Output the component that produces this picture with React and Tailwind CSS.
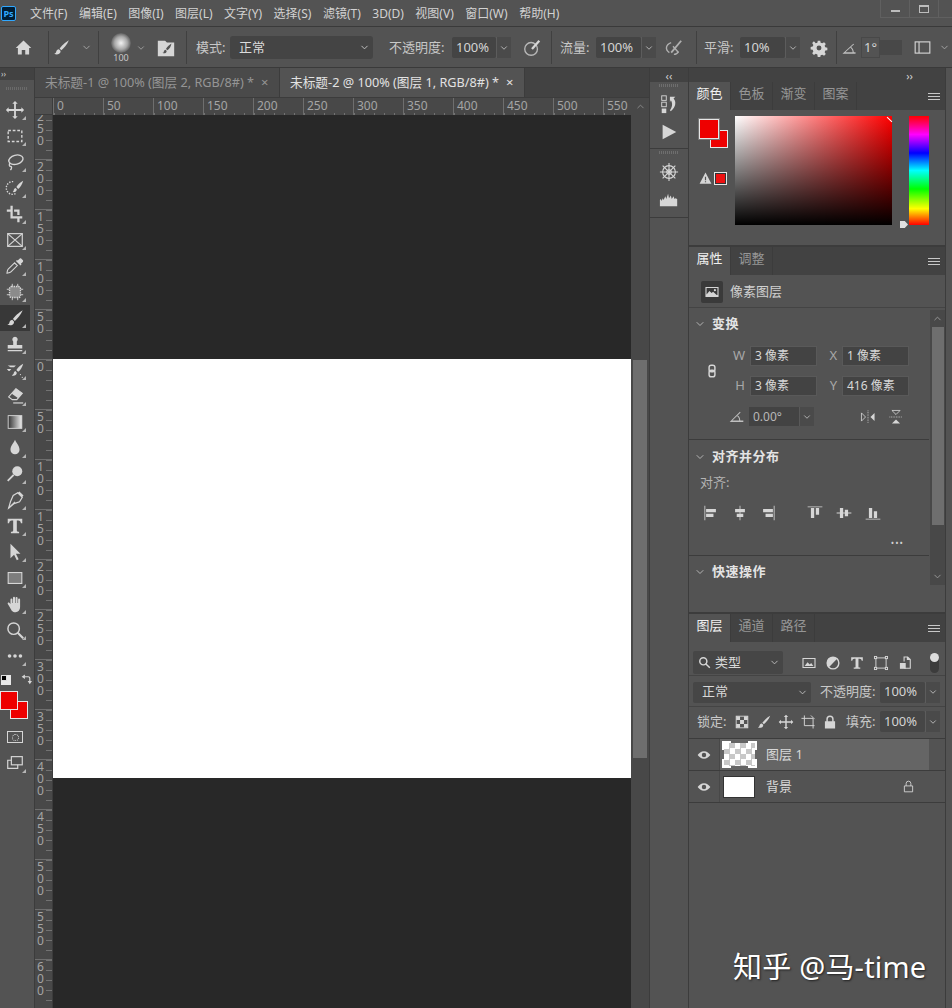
import { ChevronDown, ChevronUp } from "lucide-react";

const menus = ["文件(F)", "编辑(E)", "图像(I)", "图层(L)", "文字(Y)", "选择(S)", "滤镜(T)", "3D(D)", "视图(V)", "窗口(W)", "帮助(H)"];
const hMarks = [0, 50, 100, 150, 200, 250, 300, 350, 400, 450, 500, 550];
const vMarks = [250, 200, 150, 100, 50, 0, 50, 100, 150, 200, 250, 300, 350, 400, 450, 500, 550, 600];

const Ic = ({ size = 20, children, className = "" }) => (
  <svg width={size} height={size} viewBox="0 0 22 22" fill="#d6d6d6" stroke="none" className={className}>
    {children}
  </svg>
);

const brush = "M19.5 2.5C15 5 10.5 9.5 8.8 12.2l2 2C13.5 12 17.5 7.5 19.500 2.500zM8 13c-2 .3-3 1.700-3.200 3.200-.1 1-1 1.800-2.300 2 2.500 1.300 5.500 1 6.700-.7.8-1.100.8-2.100.6-2.700z";

const tools = [
  { icon: <path d="M11 1l3 3h-2v6h6V8l3 3-3 3v-2h-6v6h2l-3 3-3-3h2v-6H4v2l-3-3 3-3v2h6V4H8z" /> },
  { icon: <rect x="3.500" y="5" width="15" height="12" fill="none" stroke="#d6d6d6" strokeWidth="1.500" strokeDasharray="3 2" /> },
  { icon: <g fill="none" stroke="#d6d6d6" strokeWidth="1.500"><ellipse cx="12" cy="8.500" rx="8" ry="5" transform="rotate(-15 12 8.500)" /><path d="M6 12c-2 1.500-1.500 4 .5 4 1 0 1 2-.5 4" /></g> },
  { icon: <g><path d="M9 4a7 7 0 1 0 3 13" fill="none" stroke="#d6d6d6" strokeWidth="1.500" strokeDasharray="1.500 1.500" /><path d="M20 3c-3 1.500-6 4.500-7.500 7l2 2c2.500-2 4.500-5 5.500-9zM11.500 11c-1.500.5-2 2-2 3l-1 1.500c2 .5 4.500-.5 4.500-3z" /></g> },
  { icon: <path d="M6 2h2.500v11.500H19V16h-3v4h-2.500v-4H6V8.500H2V6h4zM10 6h6v6h-2.500V8.500H10z" /> },
  { icon: <g fill="none" stroke="#d6d6d6" strokeWidth="1.300"><rect x="3" y="4" width="16" height="14" /><path d="M3 4l16 14M19 4L3 18" /></g> },
  { icon: <g><path d="M17.500 2.500l2 2c.8.8.5 1.700-.2 2.300l-1.800 1.700 .7.800-1.200 1.200-5-5 1.200-1.200.8.700 1.700-1.800c.6-.7 1-1 1.800-.7z" /><path d="M10.500 7.500l-7 7c-1 1-1 2.500-1.300 4.300 1.800-.3 3.300-.3 4.300-1.300l7-7z" fill="none" stroke="#d6d6d6" strokeWidth="1.200" /></g> },
  { icon: <g><rect x="5" y="5" width="12" height="12" rx="2" fill="#8b8b8b" stroke="#d6d6d6" strokeDasharray="1.500 1" strokeWidth="1.500" /><path d="M2 8h3M2 14h3M17 8h3M17 14h3M8 2v3M14 2v3M8 17v3M14 17v3" stroke="#d6d6d6" /></g> },
  { active: true, icon: <path d={brush} /> },
  { icon: <path d="M11 3a3 3 0 0 1 2 5.200V12h6v4H3v-4h6V8.200A3 3 0 0 1 11 3zM3 17.500h16V19H3z" /> },
  { icon: <g><path d="M20 4c-3 1.500-6 4.500-7.500 7l2 2c2.500-2 4.500-5 5.500-9zM11.500 12c-1.500.5-2 2-2 3l-2 2c2 1 5.500 0 5.500-3z" /><path d="M3 6h9l-2 2H6zM2 10h5l-2 2H4z" /><circle cx="17" cy="16" r=".7" /><circle cx="19" cy="19" r=".7" /></g> },
  { icon: <g><path d="M12 3l7 5-6 7H8l-4-3z" fill="none" stroke="#d6d6d6" strokeWidth="1.200" /><path d="M12 3l7 5-4.500 5.500-7-5z" /><path d="M9 18h11v1.300H9z" /></g> },
  { icon: <g><defs><linearGradient id="gr"><stop offset="0" stopColor="#333" /><stop offset="1" stopColor="#eee" /></linearGradient></defs><rect x="3.500" y="4" width="15" height="14" fill="url(#gr)" stroke="#d6d6d6" /></g> },
  { icon: <path d="M11 2c1 3 5 6.500 5 11a5 5 0 0 1-10 0c0-4.500 4-8 5-11z" /> },
  { icon: <g><circle cx="13.500" cy="8" r="5.500" /><path d="M9.500 12L3 18.500" stroke="#d6d6d6" strokeWidth="2" /></g> },
  { icon: <g fill="none" stroke="#d6d6d6" strokeWidth="1.300"><path d="M14 3l5 5-3 5-6 2-6 5 2-7 3-7z" /><path d="M4 20l7-7" /><path d="M15 2.500l4.500 4.500" strokeWidth="2.500" /></g> },
  { icon: <path d="M3 3h16v5h-1.500c-.3-2-1-3-3-3H13v11c0 1 .8 1.300 2.500 1.300V19h-9v-1.700c1.700 0 2.500-.3 2.500-1.300V5H7.500c-2 0-2.700 1-3 3H3z" /> },
  { icon: <path d="M6 2l11 11h-5l3 6-2 1-3-6-4 4z" /> },
  { icon: <rect x="3.500" y="5" width="15" height="12" fill="#7d7d7d" stroke="#d6d6d6" strokeWidth="1.200" /> },
  { icon: <path d="M6 11V6a1.100 1.100 0 0 1 2.200 0v4h.6V4a1.100 1.100 0 0 1 2.200 0v6h.6V4.500a1.100 1.100 0 0 1 2.200 0V10h.6V6a1.100 1.100 0 0 1 2.200 0v8c0 3.500-2 6-5 6-3.500 0-4.500-2-6-5l-2.500-4c-.7-1.200.8-2.200 1.800-1.200z" /> },
  { icon: <g fill="none" stroke="#d6d6d6" strokeWidth="1.600"><circle cx="9.500" cy="9.500" r="6.300" /><path d="M14 14l6 6" strokeWidth="2.300" /></g> },
  { icon: <g><circle cx="5" cy="11" r="2" /><circle cx="11" cy="11" r="2" /><circle cx="17" cy="11" r="2" /></g> },
];

function Corner() {
  return <span className="absolute bottom-[3px] right-[4px] h-0 w-0 border-b-[4px] border-l-[4px] border-b-[#b5b5b5] border-l-transparent" />;
}

function Toolbar() {
  return (
    <div className="flex w-[35px] shrink-0 flex-col border-r border-[#3c3c3c] bg-[#535353]">
      <div className="flex h-[12px] items-center bg-[#424242] pl-[1px] text-[8px] leading-none text-[#d0d0d0]">››</div>
      <div className="flex h-[17px] items-center justify-center">
        <span className="h-[3px] w-[22px] bg-[repeating-linear-gradient(90deg,#6a6a6a_0,#6a6a6a_1px,transparent_1px,transparent_2px)]" />
      </div>
      {tools.map((t, i) => (
        <div key={i} className={`relative flex h-[26px] w-[30px] items-center justify-center ${t.active ? "bg-[#383838]" : ""}`}>
          <Ic size={20}>{t.icon}</Ic>
          <Corner />
        </div>
      ))}
      <div className="mt-[5px] flex h-[12px] items-center gap-[9px] pl-[1px]">
        <span className="relative h-[10px] w-[10px] bg-[#e8e8e8]"><span className="block h-[6px] w-[6px] border border-[#ddd] bg-black" /></span>
        <Ic size={12}><g fill="none" stroke="#d6d6d6" strokeWidth="2.200"><path d="M8 5h7a3 3 0 0 1 3 3v6" /></g><path d="M9 1v8L3 5zM14 13h8l-4 6z" /></Ic>
      </div>
      <div className="relative mt-[5px] h-[28px]">
        <span className="absolute left-[10px] top-[10px] h-[18px] w-[18px] border border-[#e6e6e6] bg-[#ee0000]" />
        <span className="absolute left-0 top-0 h-[19px] w-[18px] border border-[#e6e6e6] bg-[#ee0000]" />
      </div>
      <div className="mt-[5px] flex h-[26px] w-[30px] items-center justify-center">
        <span className="flex h-[12px] w-[16px] items-center justify-center border border-[#d6d6d6]"><span className="h-[7px] w-[7px] rounded-full border border-dotted border-[#d6d6d6]" /></span>
      </div>
      <div className="relative flex h-[26px] w-[30px] items-center justify-center">
        <Ic size={20}><g fill="none" stroke="#d6d6d6" strokeWidth="1.300"><rect x="7" y="4" width="12" height="9" /><path d="M7 8H3v9h11v-4" /></g></Ic>
        <Corner />
      </div>
    </div>
  );
}

function Field({ children, className = "" }) {
  return <div className={`flex h-[21px] items-center rounded-[2px] bg-[#444444] pl-[4px] text-[13px] text-[#d4d4d4] ${className}`}>{children}</div>;
}

function FieldChevron({ className = "" }) {
  return (
    <span className={`flex h-[21px] w-[15px] items-center justify-center border-l border-[#5c5c5c] bg-[#4a4a4a] ${className}`}>
      <ChevronDown size={10} color="#c8c8c8" />
    </span>
  );
}

function Divider() {
  return <span className="block h-[33px] w-px bg-[#404040]" />;
}

function OptionsBar() {
  return (
    <div className="flex h-[41px] shrink-0 items-center border-b border-[#3a3a3a] bg-[#535353] pt-[1px] text-[13px] text-[#c8c8c8]">
      <Ic size={19} className="ml-[14px]"><path d="M11 3l9 8.500h-2.500V19h-4.500v-5H9v5H4.500v-7.500H2z" /></Ic>
      <span className="ml-[15px]"><Divider /></span>
      <Ic size={19} className="ml-[3px]"><path d={brush} /></Ic>
      <ChevronDown size={11} color="#a8a8a8" className="ml-[10px]" />
      <span className="ml-[6px]"><Divider /></span>
      <div className="ml-[11px] flex w-[22px] flex-col items-center">
        <span className="h-[20px] w-[20px] rounded-full bg-[radial-gradient(circle,#f2f2f2_0%,#a8a8a8_45%,#535353_75%)]" />
        <span className="text-[9px] leading-[10px]">100</span>
      </div>
      <ChevronDown size={10} color="#a8a8a8" className="ml-[4px]" />
      <Ic size={20} className="ml-[10px]"><path d="M2 3h8l2 2h8v15H2zM17 6c-2.500 1.500-5 4-6 6l1.500 1.500C15 12 16.500 9 17 6zM10.500 13c-1.500.3-1.800 1.500-2 2.300-.1.500-.5 1-1.500 1 1.500 1 4 .8 4.500-.8.2-.7.2-1.200.1-1.500z" fillRule="evenodd" /></Ic>
      <span className="ml-[10px]"><Divider /></span>
      <span className="ml-[9px] w-[30px] whitespace-nowrap">模式:</span>
      <div className="ml-[4px] flex h-[23px] w-[143px] items-center justify-between rounded-[3px] bg-[#444444] pl-[9px] pr-[3px] text-[#dcdcdc]">
        正常<ChevronDown size={11} color="#c8c8c8" />
      </div>
      <span className="ml-[16px] w-[56px] whitespace-nowrap">不透明度:</span>
      <Field className="ml-[7px] w-[44px]">100%</Field>
      <FieldChevron />
      <Ic size={20} className="ml-[11px]"><g fill="none" stroke="#b8b8b8" strokeWidth="1.500"><circle cx="10" cy="12" r="7" /><path d="M19 3l-8 9" strokeWidth="2.500" stroke="#d6d6d6" /></g></Ic>
      <span className="ml-[9px]"><Divider /></span>
      <span className="ml-[8px] w-[30px] whitespace-nowrap">流量:</span>
      <Field className="ml-[6px] w-[45px]">100%</Field>
      <FieldChevron />
      <Ic size={20} className="ml-[7px]"><g fill="none" stroke="#b0b0b0" strokeWidth="1.500"><path d="M9 5C3 7 2 13 7 16M12 18c2 0 4-1 5-3" /><path d="M20 3L9 16" strokeWidth="2" /><path d="M11 9l6 7" /></g></Ic>
      <span className="ml-[13px]"><Divider /></span>
      <span className="ml-[7px] w-[30px] whitespace-nowrap">平滑:</span>
      <Field className="ml-[6px] w-[45px]">10%</Field>
      <FieldChevron />
      <Ic size={18} className="ml-[10px]"><path fillRule="evenodd" d="M9.500 2h3l.5 2.500 2 .8 2.200-1.400 2.100 2.100-1.400 2.200.8 2 2.500.5v3l-2.500.5-.8 2 1.400 2.200-2.100 2.100-2.200-1.400-2 .8-.5 2.500h-3L9 18.900l-2-.8-2.200 1.400-2.100-2.100 1.400-2.200-.8-2-2.500-.5v-3l2.500-.5.8-2-1.400-2.200 2.100-2.100L7 5.300l2-.8zM11 8a3 3 0 1 0 0 6 3 3 0 0 0 0-6z" /></Ic>
      <span className="ml-[8px]"><Divider /></span>
      <Ic size={16} className="ml-[4px]"><path d="M2 19L17 5l1 1L6 17h10c0-3-1-5-3-6.500l1-1c2.500 2 3.500 4.500 3.500 7.500H20v2z" fill="#c0c0c0" /></Ic>
      <div className="ml-[4px] flex h-[21px] w-[41px]">
        <span className="flex h-full w-[19px] items-center border border-[#484848] pl-[2px] text-[#d4d4d4]">1°</span>
        <span className="my-[3px] flex-1 bg-[#484848]" />
      </div>
      <Ic size={19} className="ml-[11px]"><g fill="none" stroke="#d6d6d6" strokeWidth="1.300"><rect x="2.500" y="4.500" width="17" height="13" /><path d="M7 4.500v13" /></g></Ic>
      <ChevronDown size={11} color="#a8a8a8" className="ml-[7px]" />
    </div>
  );
}

function HRuler() {
  return (
    <div className="flex h-[17px] shrink-0 bg-[#484848]">
      <div className="w-[18px] shrink-0 border-b border-r border-[#3c3c3c] bg-[#505050]" />
      <div className="flex w-[578px] overflow-hidden">
        {hMarks.map((m) => (
          <div key={m} className="h-full w-[50px] shrink-0 border-l border-[#6e6e6e] bg-[repeating-linear-gradient(90deg,#727272_0,#727272_1px,transparent_1px,transparent_10px)] bg-[length:100%_2px] bg-bottom bg-no-repeat pl-[3px] text-[12px] leading-[16px] text-[#a4a4a4]">
            {m}
          </div>
        ))}
      </div>
      <div className="flex flex-1 items-center justify-center bg-[#484848]">
        <ChevronUp size={11} color="#8c8c8c" />
      </div>
    </div>
  );
}

function VRuler() {
  return (
    <div className="w-[18px] shrink-0 overflow-hidden border-r border-[#3c3c3c] bg-[#484848]">
      <div className="-mt-[6px]">
        {vMarks.map((m, i) => (
          <div key={i} className="h-[50px] border-t border-[#6e6e6e] bg-[repeating-linear-gradient(180deg,#727272_0,#727272_1px,transparent_1px,transparent_10px)] bg-[length:6px_100%] bg-right bg-no-repeat pl-[2px] pt-[1px]">
            <div className="w-[8px] break-all text-[12px] leading-[12px] text-[#a4a4a4]">{m}</div>
          </div>
        ))}
      </div>
    </div>
  );
}

function DocTab({ title, active }) {
  return (
    <div className={`flex h-full w-[245px] items-center border-r border-[#3c3c3c] pl-[10px] text-[12.700px] ${active ? "bg-[#535353] text-[#e2e2e2]" : "bg-[#4a4a4a] text-[#959595]"}`}>
      <span className="w-[216px] whitespace-nowrap">{title}</span>
      <span className="text-[13px] leading-none">×</span>
    </div>
  );
}

function Document() {
  return (
    <div className="flex w-[615px] shrink-0 flex-col border-r border-[#3c3c3c]">
      <div className="flex h-[30px] shrink-0 border-b border-[#3c3c3c] bg-[#424242]">
        <DocTab title="未标题-1 @ 100% (图层 2, RGB/8#) *" />
        <DocTab title="未标题-2 @ 100% (图层 1, RGB/8#) *" active />
      </div>
      <HRuler />
      <div className="flex min-h-0 flex-1">
        <VRuler />
        <div className="flex w-[578px] shrink-0 flex-col bg-[#282828]">
          <div className="h-[244px]" />
          <div className="h-[419px] bg-white" />
        </div>
        <div className="flex-1 bg-[#484848] px-[2px] pt-[245px]">
          <div className="h-[398px] bg-[#6e6e6e]" />
        </div>
      </div>
    </div>
  );
}

function Grip() {
  return <span className="mx-auto block h-[3px] w-[20px] bg-[repeating-linear-gradient(90deg,#6e6e6e_0,#6e6e6e_1px,transparent_1px,transparent_2px)]" />;
}

function CollapsedDock() {
  return (
    <div className="flex w-[39px] shrink-0 flex-col border-r border-[#3c3c3c] bg-[#535353]">
      <div className="flex h-[14px] items-center justify-center bg-[#424242] text-[11px] leading-none text-[#d0d0d0]">‹‹</div>
      <div className="flex h-[67px] flex-col items-center border-b border-[#3c3c3c] pt-[2px]">
        <Grip />
        <Ic size={20} className="mt-[7px]">
          <g fill="none" stroke="#d6d6d6"><rect x="3" y="2" width="5" height="5" /><rect x="3" y="9" width="5" height="5" /></g>
          <rect x="3" y="16" width="5" height="5" />
          <path d="M12 3h6l-2 2c3 3 3 9-3 14l-1-1c3-4 3-8 1-11l-1 2z" />
        </Ic>
        <Ic size={20} className="mt-[8px]"><path d="M4 3l15 8-15 8z" /></Ic>
      </div>
      <div className="flex h-[69px] flex-col items-center border-b border-[#3c3c3c] pt-[2px]">
        <Grip />
        <Ic size={20} className="mt-[8px]">
          <g fill="none" stroke="#d6d6d6" strokeWidth="1.200"><circle cx="11" cy="11" r="7" /><circle cx="11" cy="11" r="2.500" /><path d="M11 1v20M1 11h20M4 4l14 14M18 4L4 18" /></g>
        </Ic>
        <Ic size={20} className="mt-[8px]"><path d="M1 18V11l1-1 1 2 1-3 1 2 2-4 1 3 2-6 1 5 2-3 1 4 2-3 1 3 1-1 2 1v8z" /></Ic>
      </div>
    </div>
  );
}

function PanelTabs({ tabs }) {
  return (
    <div className="flex h-[28px] shrink-0 items-stretch justify-between bg-[#424242] pr-[5px]">
      <div className="flex">
        {tabs.map((t, i) => (
          <div key={t} className={`flex w-[42px] items-center justify-center border-r border-[#3c3c3c] pb-[4px] text-[13px] ${i === 0 ? "bg-[#535353] text-[#f0f0f0]" : "text-[#969696]"}`}>
            {t}
          </div>
        ))}
      </div>
      <div className="flex w-[12px] flex-col justify-center gap-[2px]">
        <span className="h-px bg-[#c8c8c8]" /><span className="h-px bg-[#c8c8c8]" /><span className="h-px bg-[#c8c8c8]" />
      </div>
    </div>
  );
}

function ColorPanel() {
  return (
    <div className="flex h-[165px] shrink-0 flex-col border-b-2 border-[#3c3c3c]">
      <PanelTabs tabs={["颜色", "色板", "渐变", "图案"]} />
      <div className="flex flex-1 pl-[10px] pt-[6px]">
        <div className="mt-[3px] w-[36px]">
          <div className="relative h-[32px]">
            <span className="absolute left-[11px] top-[11px] h-[18px] w-[18px] border border-[#e6e6e6] bg-[#ee0000]" />
            <span className="absolute left-0 top-0 h-[20px] w-[20px] border border-[#e6e6e6] bg-[#ee0000] outline-1 outline-[#777]" />
          </div>
          <div className="mt-[21px] flex items-center gap-[2px]">
            <Ic size={13}><path fillRule="evenodd" d="M11 1l10 19H1zM10 8v6h2V8zM10 15.500v2h2v-2z" /></Ic>
            <span className="flex h-[13px] w-[13px] items-center justify-center border border-[#e6e6e6] bg-[#333]"><span className="h-[9px] w-[9px] bg-[#ee1111]" /></span>
          </div>
        </div>
        <div className="relative h-[109px] w-[157px] bg-[linear-gradient(to_top,#000,transparent),linear-gradient(to_right,#fff,#f00)]">
          <span className="absolute right-[2px] top-0 h-[7px] w-[1px] -rotate-45 bg-white" />
        </div>
        <div className="relative ml-[17px] h-[109px] w-[20px] bg-[linear-gradient(to_bottom,#f00,#f0f_17%,#00f_34%,#0ff_50%,#0f0_67%,#ff0_85%,#f00)]">
          <span className="absolute -left-[9px] -bottom-[3px] h-[7px] w-[8px] bg-[#e0e0e0] [clip-path:polygon(0_0,60%_0,100%_50%,60%_100%,0_100%)]" />
        </div>
      </div>
    </div>
  );
}

function SectionTitle({ children }) {
  return (
    <div className="flex items-center text-[13px] font-bold leading-none tracking-[0.500px] text-[#e4e4e4]">
      <ChevronDown size={12} color="#b4b4b4" className="ml-[5px] mr-[6px]" />
      {children}
    </div>
  );
}

function NumField({ label, value }) {
  return (
    <div className="flex items-center">
      <span className="w-[18px] pr-[5px] text-right text-[13px] text-[#a8a8a8]">{label}</span>
      <div className="flex h-[20px] w-[67px] items-center border border-[#595959] bg-[#434343] pl-[4px] text-[12px] text-[#d8d8d8]">{value}</div>
    </div>
  );
}

function AlignIcon({ d }) {
  return <Ic size={18}><path d={d} /></Ic>;
}

function PropertiesPanel() {
  return (
    <div className="flex h-[367px] shrink-0 flex-col border-b-2 border-[#3c3c3c]">
      <PanelTabs tabs={["属性", "调整"]} />
      <div className="flex h-[33px] shrink-0 items-center gap-[7px] border-b border-[#444] pl-[12px] pt-[2px] text-[13px] text-[#d0d0d0]">
        <span className="flex h-[22px] w-[22px] items-center justify-center rounded-[2px] bg-[#3a3a3a]">
          <Ic size={16}><path fillRule="evenodd" d="M2 4h18v14H2zM3.500 5.500v9l4-5 3 3 2-2 5 4.500h1V5.500zM15 7a1.500 1.500 0 1 1 0 3 1.500 1.500 0 0 1 0-3z" /></Ic>
        </span>
        像素图层
      </div>
      <div className="flex min-h-0 flex-1">
        <div className="w-[240px] shrink-0">
          <div className="h-[132px] border-b border-[#3c3c3c] pt-[9px]">
            <SectionTitle>变换</SectionTitle>
            <div className="flex items-center">
              <Ic size={16} className="ml-[15px] mt-[16px]"><g fill="none" stroke="#d6d6d6" strokeWidth="2"><rect x="7" y="3" width="8" height="9" rx="3" /><rect x="7" y="10" width="8" height="9" rx="3" /></g></Ic>
              <div className="ml-[12px] mt-[16px] flex flex-col gap-[10px]">
                <div className="flex gap-[7px]"><NumField label="W" value="3 像素" /><NumField label="X" value="1 像素" /></div>
                <div className="flex gap-[7px]"><NumField label="H" value="3 像素" /><NumField label="Y" value="416 像素" /></div>
              </div>
            </div>
            <div className="mt-[11px] flex items-center">
              <Ic size={15} className="ml-[40px]"><path d="M1 19L16 4l1 1L5 17h10c0-3-1-5-3-6.500l1-1c2.500 2 3.500 4.500 3.500 7.500H21v2z" fill="#c0c0c0" /></Ic>
              <div className="ml-[5px] flex h-[19px] w-[50px] items-center bg-[#434343] pl-[4px] text-[12px] text-[#b8b8b8]">0.00°</div>
              <span className="flex h-[19px] w-[15px] items-center justify-center border-l border-[#595959] bg-[#4a4a4a]"><ChevronDown size={10} color="#c0c0c0" /></span>
              <Ic size={18} className="ml-[45px]"><g><path d="M3 6l5 5-5 5z" fill="none" stroke="#d6d6d6" /><path d="M19 6l-5 5 5 5z" /><path d="M11 3v16" stroke="#d6d6d6" strokeDasharray="1 1" /></g></Ic>
              <Ic size={18} className="ml-[10px]"><g><path d="M6 3l5 5 5-5z" fill="none" stroke="#d6d6d6" /><path d="M6 19l5-5 5 5z" /><path d="M3 11h16" stroke="#d6d6d6" strokeDasharray="1 1" /></g></Ic>
            </div>
          </div>
          <div className="h-[116px] border-b border-[#3c3c3c] pt-[10px]">
            <SectionTitle>对齐并分布</SectionTitle>
            <div className="mt-[11px] pl-[11px] text-[13px] leading-[16px] text-[#b4b4b4]">对齐:</div>
            <div className="mt-[14px] flex items-center pl-[13px]">
              <AlignIcon d="M3 2h1v18H3zM5 6h12v4H5zM5 12h9v4H5z" />
              <span className="ml-[11px]"><AlignIcon d="M10.500 2h1v18h-1zM5 6h12v4H5zM7 12h8v4H7z" /></span>
              <span className="ml-[10px]"><AlignIcon d="M18 2h1v18h-1zM5 6h12v4H5zM8 12h9v4H8z" /></span>
              <span className="ml-[29px]"><AlignIcon d="M2 3h18v1H2zM6 5h4v12H6zM12 5h4v8h-4z" /></span>
              <span className="ml-[11px]"><AlignIcon d="M2 10.500h18v1H2zM6 5h4v12H6zM12 7h4v8h-4z" /></span>
              <span className="ml-[11px]"><AlignIcon d="M2 18h18v1H2zM6 5h4v12H6zM12 9h4v8h-4z" /></span>
            </div>
            <div className="mt-[14px] pr-[25px] text-right text-[9px] leading-[14px] tracking-[1px] text-[#d0d0d0]">•••</div>
          </div>
          <div className="pt-[9px]">
            <SectionTitle>快速操作</SectionTitle>
          </div>
        </div>
        <div className="ml-[1px] mt-[2px] flex h-[275px] w-[15px] flex-col items-center bg-[#484848]">
          <ChevronUp size={11} color="#9a9a9a" className="my-[3px]" />
          <div className="h-[198px] w-[12px] bg-[#6e6e6e]" />
          <div className="flex-1" />
          <ChevronDown size={11} color="#9a9a9a" className="mb-[3px]" />
        </div>
      </div>
    </div>
  );
}

function LayerRow({ name, selected, thumb, locked }) {
  return (
    <div className="flex h-[32px] border-b border-[#3c3c3c]">
      <div className="flex w-[31px] items-center justify-center border-r border-[#484848]">
        <Ic size={14}><path fillRule="evenodd" d="M11 5c4.500 0 8 3.500 10 6-2 2.500-5.500 6-10 6S3 13.500 1 11c2-2.500 5.500-6 10-6zM11 7.500a3.500 3.500 0 1 0 0 7 3.500 3.500 0 0 0 0-7z" /></Ic>
      </div>
      <div className={`flex w-[209px] items-center pl-[2px] text-[13px] text-[#d8d8d8] ${selected ? "bg-[#656565]" : "bg-[#535353]"}`}>
        {thumb}
        <span className="ml-[9px]">{name}</span>
        {locked && <Ic size={13} className="ml-[110px]"><path fill="none" stroke="#d6d6d6" strokeWidth="1.500" d="M4 10h14v10H4zM7 10V6a4 4 0 0 1 8 0v4" /></Ic>}
      </div>
    </div>
  );
}

function LayersPanel() {
  const filters = [
    <path key="a" fillRule="evenodd" d="M2 4h18v14H2zM3.500 5.500v11h15v-11zM5 15l4-5 3 3 2-2 3 4z" />,
    <path key="b" fillRule="evenodd" d="M11 2a9 9 0 1 1 0 18 9 9 0 0 1 0-18zM16 6L6 16a7 7 0 0 0 10-10z" />,
    <path key="c" d="M3 3h16v5h-1.500c-.3-2-1-3-3-3H13v11c0 1 .8 1.300 2.500 1.300V19h-9v-1.700c1.700 0 2.500-.3 2.500-1.300V5H7.500c-2 0-2.700 1-3 3H3z" />,
    <g key="d" fill="none" stroke="#d6d6d6" strokeWidth="1.300"><rect x="4" y="4" width="14" height="14" /><rect x="2" y="2" width="3" height="3" fill="#535353" /><rect x="17" y="2" width="3" height="3" fill="#535353" /><rect x="2" y="17" width="3" height="3" fill="#535353" /><rect x="17" y="17" width="3" height="3" fill="#535353" /></g>,
    <g key="e"><path d="M9 2h6l4 4v13H10v-1.500h7.500V7h-4V3.500H10.500V9H9z" /><rect x="4" y="11" width="8" height="8" /></g>,
  ];
  const locks = [
    <g key="a"><rect x="3" y="3" width="16" height="16" fill="none" stroke="#d6d6d6" strokeWidth="1.200" /><path d="M3 3h5.300v5.300H3zM13.700 3H19v5.300h-5.300zM8.300 8.300h5.400v5.400H8.300zM3 13.700h5.300V19H3zM13.700 13.700H19V19h-5.300z" /></g>,
    <path key="b" d={brush} />,
    <path key="c" d="M11 1l3 3h-2v6h6V8l3 3-3 3v-2h-6v6h2l-3 3-3-3h2v-6H4v2l-3-3 3-3v2h6V4H8z" />,
    <g key="d" fill="none" stroke="#d6d6d6" strokeWidth="1.300"><path d="M2 6h16v14M6 2v14h14" /><path d="M15 2l5 5" /></g>,
    <path key="e" fillRule="evenodd" d="M6 10V7a5 5 0 0 1 10 0v3h2v10H4V10zM8 10h6V7a3 3 0 0 0-6 0z" />,
  ];
  return (
    <div className="flex min-h-0 flex-1 flex-col">
      <PanelTabs tabs={["图层", "通道", "路径"]} />
      <div className="flex h-[34px] shrink-0 items-center border-b border-[#444] pl-[4px] pt-[8px]">
        <div className="flex h-[23px] w-[90px] items-center justify-between rounded-[2px] bg-[#464646] pl-[5px] pr-[3px] text-[13px] text-[#d8d8d8]">
          <span className="flex items-center gap-[4px]">
            <Ic size={13}><g fill="none" stroke="#d6d6d6" strokeWidth="2.500"><circle cx="9" cy="9" r="6" /><path d="M13 13l7 7" /></g></Ic>类型
          </span>
          <ChevronDown size={11} color="#c0c0c0" />
        </div>
        <div className="ml-[18px] flex gap-[8px]">
          {filters.map((f, i) => <Ic key={i} size={16}>{f}</Ic>)}
        </div>
        <div className="ml-[17px] flex h-[20px] w-[9px] flex-col items-center rounded-full bg-[#3c3c3c]">
          <span className="h-[9px] w-[9px] rounded-full bg-[#dcdcdc]" />
        </div>
      </div>
      <div className="flex h-[31px] shrink-0 items-center border-b border-[#444] pl-[4px] pt-[2px] text-[13px] text-[#c8c8c8]">
        <div className="flex h-[21px] w-[118px] items-center justify-between rounded-[2px] bg-[#464646] pl-[9px] pr-[3px] text-[#d8d8d8]">
          正常<ChevronDown size={11} color="#c0c0c0" />
        </div>
        <span className="ml-[9px] w-[56px] whitespace-nowrap">不透明度:</span>
        <Field className="ml-[4px] w-[45px] bg-[#464646]">100%</Field>
        <FieldChevron />
      </div>
      <div className="flex h-[32px] shrink-0 items-center border-b border-[#3c3c3c] pb-[2px] pl-[8px] text-[13px] text-[#c8c8c8]">
        <span className="w-[30px] whitespace-nowrap">锁定:</span>
        <div className="ml-[7px] flex gap-[6px]">
          {locks.map((l, i) => <Ic key={i} size={16}>{l}</Ic>)}
        </div>
        <span className="ml-[8px] w-[30px] whitespace-nowrap">填充:</span>
        <Field className="ml-[4px] w-[45px] bg-[#464646]">100%</Field>
        <FieldChevron />
      </div>
      <LayerRow
        name="图层 1"
        selected
        thumb={
          <span className="relative block h-[27px] w-[35px] p-[2px]">
            <span className="block h-full w-full bg-[repeating-conic-gradient(#c8c8c8_0_25%,#fff_0_50%)] bg-[length:11px_11px]" />
            <span className="absolute left-0 top-0 h-[9px] w-[9px] border-l-2 border-t-2 border-white" />
            <span className="absolute right-0 top-0 h-[9px] w-[9px] border-r-2 border-t-2 border-white" />
            <span className="absolute bottom-0 left-0 h-[9px] w-[9px] border-b-2 border-l-2 border-white" />
            <span className="absolute bottom-0 right-0 h-[9px] w-[9px] border-b-2 border-r-2 border-white" />
          </span>
        }
      />
      <LayerRow
        name="背景"
        locked
        thumb={<span className="ml-[1px] mr-[2px] block h-[22px] w-[32px] border border-[#333] bg-white" />}
      />
    </div>
  );
}

export default function App() {
  return (
    <div className="relative flex h-[1008px] w-[952px] flex-col overflow-hidden bg-[#535353] [font-family:'Noto_Sans','Noto_Sans_CJK_SC',sans-serif]">
      <div className="flex h-[27px] shrink-0 items-center border-b border-[#3a3a3a] bg-[#535353] text-[12px] text-[#d2d2d2]">
        <span className="ml-[1px] flex h-[15px] w-[15px] items-center justify-center rounded-[2px] border border-[#31a8ff] bg-[#001e36] text-[9px] font-bold leading-none text-[#31a8ff]">Ps</span>
        <div className="ml-[14px] flex gap-[11.500px] pt-[2px]">
          {menus.map((m) => <span key={m}>{m}</span>)}
        </div>
        <div className="ml-auto flex h-[18px] w-[72px] self-start border-b border-l border-[#606060]">
          <span className="flex w-[29px] items-center justify-center border-r border-[#606060]"><span className="mt-[5px] h-[2px] w-[9px] bg-[#bdbdbd]" /></span>
          <span className="flex w-[29px] items-center justify-center border-r border-[#606060]"><span className="h-[8px] w-[10px] border border-t-2 border-[#bdbdbd]" /></span>
        </div>
      </div>
      <OptionsBar />
      <div className="flex min-h-0 flex-1">
        <Toolbar />
        <Document />
        <CollapsedDock />
        <div className="flex w-[263px] shrink-0">
          <div className="flex w-[257px] shrink-0 flex-col border-r border-[#3c3c3c]">
            <div className="flex h-[14px] shrink-0 items-center justify-end bg-[#424242] pr-[32px] text-[11px] leading-none text-[#d0d0d0]">››</div>
            <ColorPanel />
            <PropertiesPanel />
            <LayersPanel />
          </div>
          <div className="flex-1 bg-[#535353]" />
        </div>
      </div>
      <div className="absolute left-[733px] top-[947px] whitespace-nowrap text-[29px] leading-[40px] tracking-[0.200px] text-white [text-shadow:1px_1px_2px_#222]">
        知乎 @马-time
      </div>
    </div>
  );
}
